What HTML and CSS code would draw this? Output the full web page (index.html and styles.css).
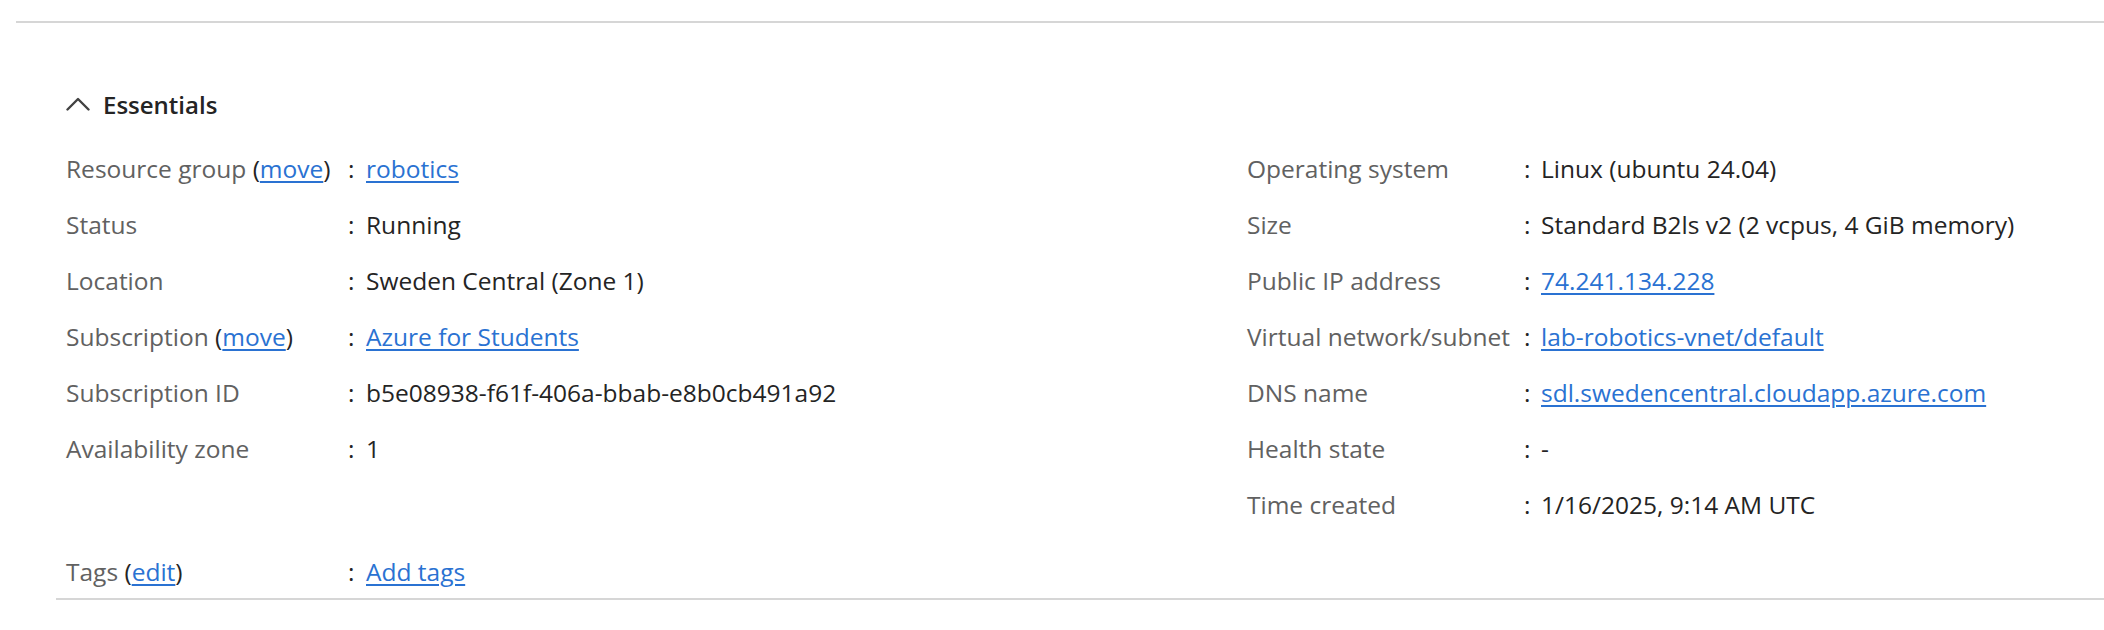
FILE: index.html
```html
<!DOCTYPE html>
<html lang="en">
<head>
<meta charset="utf-8">
<title>Essentials</title>
<link rel="stylesheet" href="styles.css">
</head>
<body>
<div class="top-rule"></div>
<section class="essentials">
  <div class="header">
    <svg class="chevron" width="24" height="14" viewBox="0 0 24 14" aria-hidden="true">
      <path d="M1.5 12.5 L12 2 L22.5 12.5" fill="none" stroke="#424242" stroke-width="2.4" stroke-linecap="round" stroke-linejoin="round"/>
    </svg>
    <span class="title">Essentials</span>
  </div>
  <div class="grid">
    <div class="col col-left">
      <div class="row"><span class="label">Resource group <span class="paren">(</span><a href="#">move</a><span class="paren">)</span></span><span class="colon">:</span><a class="value link" href="#">robotics</a></div>
      <div class="row"><span class="label">Status</span><span class="colon">:</span><span class="value">Running</span></div>
      <div class="row"><span class="label">Location</span><span class="colon">:</span><span class="value">Sweden Central (Zone 1)</span></div>
      <div class="row"><span class="label">Subscription <span class="paren">(</span><a href="#">move</a><span class="paren">)</span></span><span class="colon">:</span><a class="value link" href="#">Azure for Students</a></div>
      <div class="row"><span class="label">Subscription ID</span><span class="colon">:</span><span class="value">b5e08938-f61f-406a-bbab-e8b0cb491a92</span></div>
      <div class="row"><span class="label">Availability zone</span><span class="colon">:</span><span class="value">1</span></div>
    </div>
    <div class="col col-right">
      <div class="row"><span class="label">Operating system</span><span class="colon">:</span><span class="value">Linux (ubuntu 24.04)</span></div>
      <div class="row"><span class="label">Size</span><span class="colon">:</span><span class="value">Standard B2ls v2 (2 vcpus, 4 GiB memory)</span></div>
      <div class="row"><span class="label">Public IP address</span><span class="colon">:</span><a class="value link" href="#">74.241.134.228</a></div>
      <div class="row"><span class="label">Virtual network/subnet</span><span class="colon">:</span><a class="value link" href="#">lab-robotics-vnet/default</a></div>
      <div class="row"><span class="label">DNS name</span><span class="colon">:</span><a class="value link" href="#">sdl.swedencentral.cloudapp.azure.com</a></div>
      <div class="row"><span class="label">Health state</span><span class="colon">:</span><span class="value">-</span></div>
      <div class="row"><span class="label">Time created</span><span class="colon">:</span><span class="value">1/16/2025, 9:14 AM UTC</span></div>
    </div>
  </div>
  <div class="row tags-row"><span class="label">Tags <span class="paren">(</span><a href="#">edit</a><span class="paren">)</span></span><span class="colon">:</span><a class="value link" href="#">Add tags</a></div>
</section>
</body>
</html>
```

FILE: styles.css
```css
html, body {
  margin: 0;
  padding: 0;
  background: #ffffff;
}

body {
  font-family: "Open Sans", "Noto Sans", sans-serif;
  font-size: 24.5px;
  color: #242424;
}

a {
  color: #2a72d2;
  text-decoration: underline;
  text-decoration-thickness: 2px;
  text-underline-offset: 3px;
}

.top-rule {
  margin: 21px 0 0 16px;
  height: 2px;
  background: #d6d6d6;
}

.essentials {
  margin-left: 56px;
  padding-left: 10px;
  border-bottom: 2px solid #d6d6d6;
}

.header {
  margin-top: 53px;
  height: 56px;
  display: flex;
  align-items: center;
  gap: 13px;
}

.chevron {
  display: block;
  flex: none;
}

.title {
  font-weight: 600;
  font-size: 24px;
  color: #242424;
}

.grid {
  margin-top: 9px;
  display: grid;
  grid-template-columns: 1181px 1fr;
}

.row {
  display: flex;
  align-items: center;
  height: 56px;
  line-height: 56px;
  white-space: nowrap;
}

.label {
  color: #616161;
  flex: none;
}

.paren {
  color: #242424;
}

.col-left .label,
.tags-row .label {
  width: 282px;
}

.col-right .label {
  width: 277px;
}

.colon {
  flex: none;
  width: 18px;
  color: #242424;
}

.col-right .colon {
  width: 17px;
}

.value {
  color: #242424;
}

.value.link {
  color: #2a72d2;
}

.tags-row {
  margin-top: 12px;
  height: 53px;
  line-height: 53px;
}
```
